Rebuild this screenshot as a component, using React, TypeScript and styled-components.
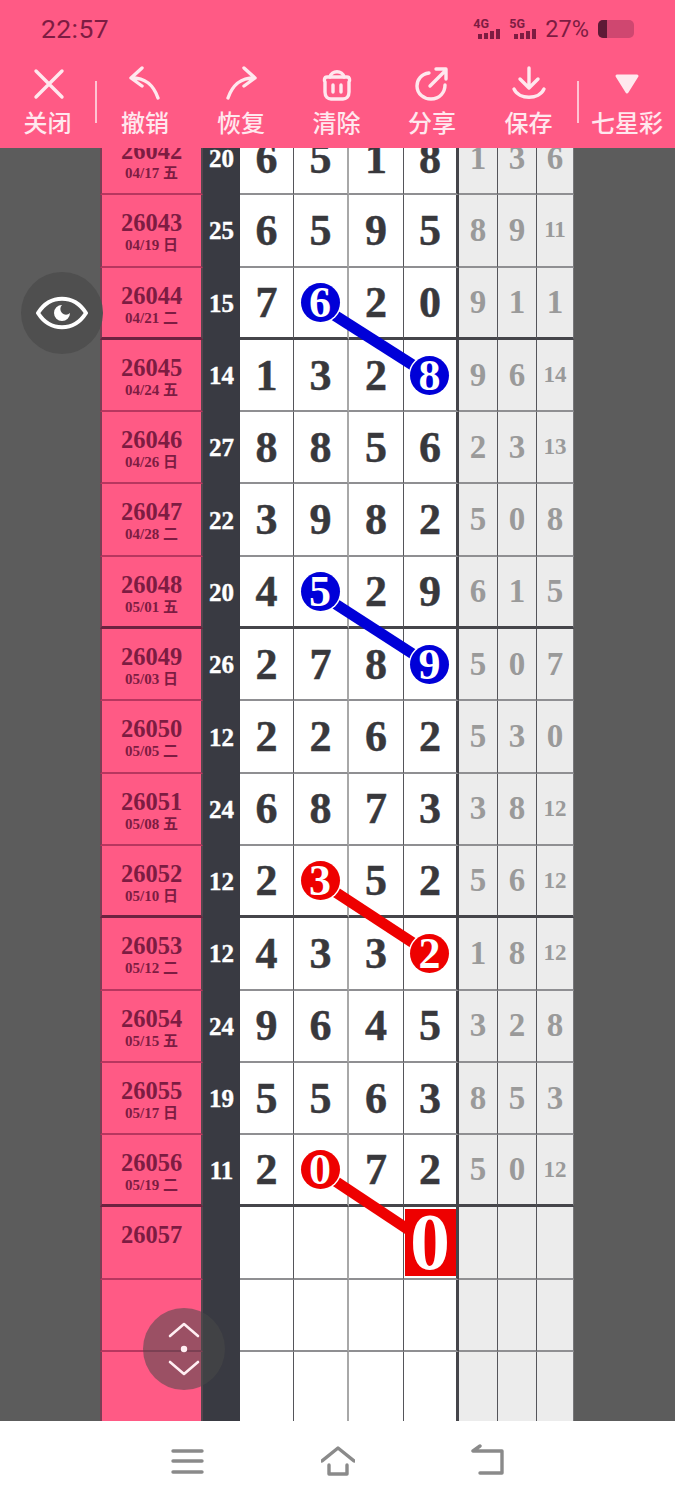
import React from "react";
import styled, { createGlobalStyle } from "styled-components";

const GlobalStyle = createGlobalStyle`
  html, body {
    margin: 0;
    padding: 0;
    background: #5c5c5c;
  }
`;

const SERIF = `"Liberation Serif", "Noto Sans CJK SC", serif`;
const ROW_H = 72.3;
const THIN_LINE = "2px solid #8f8f92";
const THICK_LINE = "3px solid #45454a";

const Page = styled.div`
  position: relative;
  width: 675px;
  height: 1500px;
  display: flex;
  flex-direction: column;
  overflow: hidden;
  font-family: "Noto Sans CJK SC", sans-serif;
`;

const Header = styled.header`
  height: 148px;
  flex: none;
  background: #ff5a85;
  z-index: 5;
`;

const StatusBar = styled.div`
  height: 57px;
  display: flex;
  align-items: center;
  justify-content: space-between;
  padding: 0 41px;
  color: #7d1c42;
`;

const Clock = styled.span`
  font-family: Roboto, sans-serif;
  font-size: 26.5px;
  letter-spacing: 0.4px;
`;

const StatusRight = styled.div`
  display: flex;
  align-items: center;
`;

const Signal = styled.div`
  position: relative;
  width: 30px;
  height: 19px;
  margin-right: 6px;
`;

const SignalLabel = styled.span`
  position: absolute;
  left: 0;
  top: 0;
  font-family: Roboto, sans-serif;
  font-weight: 700;
  font-size: 12.5px;
  line-height: 10px;
`;

const SignalBars = styled.svg`
  position: absolute;
  left: 5px;
  top: 10px;
`;

const Percent = styled.span`
  font-family: Roboto, sans-serif;
  font-size: 23.5px;
  margin-right: 9px;
`;

const Battery = styled.div`
  width: 36px;
  height: 18px;
  border-radius: 5px;
  background: #cf4770;
  overflow: hidden;
`;

const BatteryFill = styled.div`
  width: 9px;
  height: 100%;
  background: #5e1a36;
`;

const Toolbar = styled.div`
  height: 91px;
  display: flex;
  align-items: flex-start;
`;

const Tool = styled.div<{ $w: number }>`
  width: ${(p) => p.$w}px;
  flex: none;
  display: flex;
  flex-direction: column;
  align-items: center;
  color: #ffe8ee;
`;

const ToolIcon = styled.div`
  height: 38px;
  margin-top: 8px;
  display: flex;
  align-items: center;
  justify-content: center;
`;

const ToolLabel = styled.span`
  font-size: 24px;
  font-weight: 500;
  line-height: 30px;
  margin-top: 4px;
  white-space: nowrap;
`;

const ToolDivider = styled.div`
  width: 2px;
  height: 42px;
  flex: none;
  margin-top: 24px;
  background: #ffc4d3;
`;

const Main = styled.main`
  position: relative;
  flex: 1;
  min-height: 0;
  overflow: hidden;
  padding-left: 100px;
  background: #5c5c5c;
`;

const Table = styled.div`
  width: 473px;
  margin-top: -25px;
`;

const Row = styled.div`
  display: flex;
  height: ${ROW_H}px;
`;

const DateCell = styled.div<{ $thick: boolean }>`
  width: 103px;
  flex: none;
  box-sizing: border-box;
  display: flex;
  flex-direction: column;
  align-items: center;
  padding-top: 13px;
  background: #ff5a85;
  border-left: 2px solid #7a3f55;
  border-right: 2px solid #55454e;
  border-bottom: ${(p) => (p.$thick ? "3px solid #6e2240" : "2px solid #b8365f")};
  color: #7d1c42;
  font-family: ${SERIF};
  font-weight: 700;
`;

const Issue = styled.span`
  font-size: 24.5px;
  line-height: 29px;
`;

const DateText = styled.span`
  font-size: 15px;
  line-height: 17px;
`;

const SumCell = styled.div`
  width: 37px;
  flex: none;
  display: flex;
  align-items: center;
  justify-content: center;
  background: #393a42;
  color: #fff;
  font-family: ${SERIF};
  font-weight: 700;
  font-size: 25px;
  -webkit-text-stroke: 0.4px #fff;
`;

const NumCell = styled.div<{ $w: number; $line: string; $thick: boolean }>`
  width: ${(p) => p.$w}px;
  flex: none;
  box-sizing: border-box;
  display: flex;
  align-items: center;
  justify-content: center;
  background: #fff;
  border-right: ${(p) => p.$line};
  border-bottom: ${(p) => (p.$thick ? THICK_LINE : THIN_LINE)};
  color: #38383c;
  font-family: ${SERIF};
  font-weight: 700;
  font-size: 44px;
  -webkit-text-stroke: 0.5px currentColor;
`;

const GrayCell = styled.div<{ $w: number; $line: string; $small: boolean; $thick: boolean }>`
  width: ${(p) => p.$w}px;
  flex: none;
  box-sizing: border-box;
  display: flex;
  align-items: center;
  justify-content: center;
  background: #ececec;
  border-right: ${(p) => p.$line};
  border-bottom: ${(p) => (p.$thick ? THICK_LINE : THIN_LINE)};
  color: #9a9a9a;
  font-family: ${SERIF};
  font-weight: 700;
  font-size: ${(p) => (p.$small ? 23 : 33)}px;
`;

const Bubble = styled.span<{ $color: string }>`
  position: relative;
  z-index: 2;
  width: 39px;
  height: 39px;
  flex: none;
  margin-left: -1px;
  display: flex;
  align-items: center;
  justify-content: center;
  border-radius: 50%;
  background: ${(p) => p.$color};
  box-shadow: 0 0 0 1.5px #fff;
  color: #fff;
  font-size: 44px;
  line-height: 39px;
  -webkit-text-stroke: 0;
`;

const BigDigit = styled.span`
  position: relative;
  z-index: 2;
  width: 51px;
  height: 67px;
  flex: none;
  display: flex;
  align-items: center;
  justify-content: center;
  background: #ee0000;
  color: #fff;
  font-size: 80px;
  line-height: 67px;
  -webkit-text-stroke: 0;
`;

const Connectors = styled.svg`
  position: absolute;
  left: 0;
  top: 0;
  z-index: 1;
  pointer-events: none;
`;

const Fab = styled.div<{ $bg: string; $left: number; $top: number }>`
  position: absolute;
  left: ${(p) => p.$left}px;
  top: ${(p) => p.$top}px;
  z-index: 3;
  width: 82px;
  height: 82px;
  display: flex;
  align-items: center;
  justify-content: center;
  border-radius: 50%;
  background: ${(p) => p.$bg};
`;

const BottomNav = styled.nav`
  height: 79px;
  flex: none;
  display: flex;
  align-items: center;
  background: #fff;
  padding-left: 171px;
  gap: 116px;
  z-index: 5;
`;

type Mark = { col: number; kind: "blue" | "red" };
type RowData = {
  issue: string;
  date?: string;
  sum?: string;
  nums: string[];
  stats: string[];
  mark?: Mark;
  thick?: boolean;
};

const rows: RowData[] = [
  { issue: "26042", date: "04/17 五", sum: "20", nums: ["6", "5", "1", "8"], stats: ["1", "3", "6"] },
  { issue: "26043", date: "04/19 日", sum: "25", nums: ["6", "5", "9", "5"], stats: ["8", "9", "11"] },
  { issue: "26044", date: "04/21 二", sum: "15", nums: ["7", "6", "2", "0"], stats: ["9", "1", "1"], mark: { col: 1, kind: "blue" }, thick: true },
  { issue: "26045", date: "04/24 五", sum: "14", nums: ["1", "3", "2", "8"], stats: ["9", "6", "14"], mark: { col: 3, kind: "blue" } },
  { issue: "26046", date: "04/26 日", sum: "27", nums: ["8", "8", "5", "6"], stats: ["2", "3", "13"] },
  { issue: "26047", date: "04/28 二", sum: "22", nums: ["3", "9", "8", "2"], stats: ["5", "0", "8"] },
  { issue: "26048", date: "05/01 五", sum: "20", nums: ["4", "5", "2", "9"], stats: ["6", "1", "5"], mark: { col: 1, kind: "blue" }, thick: true },
  { issue: "26049", date: "05/03 日", sum: "26", nums: ["2", "7", "8", "9"], stats: ["5", "0", "7"], mark: { col: 3, kind: "blue" } },
  { issue: "26050", date: "05/05 二", sum: "12", nums: ["2", "2", "6", "2"], stats: ["5", "3", "0"] },
  { issue: "26051", date: "05/08 五", sum: "24", nums: ["6", "8", "7", "3"], stats: ["3", "8", "12"] },
  { issue: "26052", date: "05/10 日", sum: "12", nums: ["2", "3", "5", "2"], stats: ["5", "6", "12"], mark: { col: 1, kind: "red" }, thick: true },
  { issue: "26053", date: "05/12 二", sum: "12", nums: ["4", "3", "3", "2"], stats: ["1", "8", "12"], mark: { col: 3, kind: "red" } },
  { issue: "26054", date: "05/15 五", sum: "24", nums: ["9", "6", "4", "5"], stats: ["3", "2", "8"] },
  { issue: "26055", date: "05/17 日", sum: "19", nums: ["5", "5", "6", "3"], stats: ["8", "5", "3"] },
  { issue: "26056", date: "05/19 二", sum: "11", nums: ["2", "0", "7", "2"], stats: ["5", "0", "12"], mark: { col: 1, kind: "red" }, thick: true },
  { issue: "26057", nums: ["", "", "", "0"], stats: ["", "", ""] },
  { issue: "", nums: ["", "", "", ""], stats: ["", "", ""] },
  { issue: "", nums: ["", "", "", ""], stats: ["", "", ""] },
];

const numCols = [
  { w: 54, line: "1px solid #55555a" },
  { w: 55, line: "2px solid #a8a8a8" },
  { w: 55, line: "1px solid #55555a" },
  { w: 55, line: "3px solid #45454a" },
];

const statCols = [
  { w: 39, line: "1px solid #55555a" },
  { w: 39, line: "1px solid #55555a" },
  { w: 37, line: "1px solid #77777a" },
];

const links = [
  { color: "#0000d8", y1: 158, y2: 228 },
  { color: "#0000d8", y1: 446, y2: 517 },
  { color: "#ee0000", y1: 734, y2: 806 },
  { color: "#ee0000", y1: 1023, y2: 1096 },
];

const Icon: React.FC<{ w?: number; h?: number; children: React.ReactNode }> = ({ w = 36, h = 36, children }) => (
  <svg width={w} height={h} viewBox={`0 0 ${w} ${h}`} fill="none" stroke="#ffe8ee" strokeWidth={3.4} strokeLinecap="round" strokeLinejoin="round">
    {children}
  </svg>
);

const tools = [
  {
    label: "关闭",
    w: 95,
    icon: <Icon><path d="M6 5 L32 31 M32 5 L6 31" /></Icon>,
  },
  {
    label: "撤销",
    w: 96,
    icon: <Icon><path d="M15 2 L4 12 L15 20 M5 12 C18 12 26 18 31 32" /></Icon>,
  },
  {
    label: "恢复",
    w: 96,
    icon: <Icon><path d="M21 2 L32 12 L21 20 M31 12 C18 12 10 18 5 32" /></Icon>,
  },
  {
    label: "清除",
    w: 95,
    icon: (
      <Icon>
        <path d="M8 11 H28 C31 11 31 15 30 16 V26 C30 31 27 33 24 33 H12 C9 33 6 31 6 26 V16 C5 15 5 11 8 11 Z" />
        <path d="M11 11 C12 4 24 4 25 11 M14 19 V26 M22 19 V26" />
      </Icon>
    ),
  },
  {
    label: "分享",
    w: 96,
    icon: (
      <Icon>
        <path d="M15 7 C7 8 3 14 3 20 C3 28 10 33 17 33 C26 33 31 26 31 19" />
        <path d="M16 20 L32 4 M22 3 H32 V13" />
      </Icon>
    ),
  },
  {
    label: "保存",
    w: 97,
    icon: (
      <Icon>
        <path d="M18 2 V21 M9 13 L18 22 L27 13 M3 23 C8 34 28 34 33 23" />
      </Icon>
    ),
  },
];

const NavIcon: React.FC<{ children: React.ReactNode }> = ({ children }) => (
  <svg width={34} height={34} viewBox="0 0 34 34" fill="none" stroke="#8a8a8a" strokeWidth={3.4} strokeLinecap="round" strokeLinejoin="round">
    {children}
  </svg>
);

const SignalIcon: React.FC<{ label: string }> = ({ label }) => (
  <Signal>
    <SignalLabel>{label}</SignalLabel>
    <SignalBars width={23} height={10} viewBox="0 0 23 10" fill="currentColor">
      <rect x="0" y="5" width="4" height="5" />
      <rect x="6" y="4" width="4" height="6" />
      <rect x="12" y="2" width="4" height="8" />
      <rect x="18" y="0" width="4" height="10" />
    </SignalBars>
  </Signal>
);

export default function App() {
  return (
    <Page>
      <GlobalStyle />
      <Header>
        <StatusBar>
          <Clock>22:57</Clock>
          <StatusRight>
            <SignalIcon label="4G" />
            <SignalIcon label="5G" />
            <Percent>27%</Percent>
            <Battery>
              <BatteryFill />
            </Battery>
          </StatusRight>
        </StatusBar>
        <Toolbar>
          {tools.slice(0, 1).map((t) => (
            <Tool key={t.label} $w={t.w}>
              <ToolIcon>{t.icon}</ToolIcon>
              <ToolLabel>{t.label}</ToolLabel>
            </Tool>
          ))}
          <ToolDivider />
          {tools.slice(1).map((t) => (
            <Tool key={t.label} $w={t.w}>
              <ToolIcon>{t.icon}</ToolIcon>
              <ToolLabel>{t.label}</ToolLabel>
            </Tool>
          ))}
          <ToolDivider />
          <Tool $w={96}>
            <ToolIcon>
              <svg width={26} height={22} viewBox="0 0 26 22" fill="#ffe8ee" stroke="#ffe8ee" strokeWidth={3} strokeLinejoin="round">
                <path d="M3 3 H23 L13 19 Z" />
              </svg>
            </ToolIcon>
            <ToolLabel>七星彩</ToolLabel>
          </Tool>
        </Toolbar>
      </Header>

      <Main>
        <Table>
          {rows.map((r, i) => (
            <Row key={i}>
              <DateCell $thick={!!r.thick}>
                <Issue>{r.issue}</Issue>
                {r.date && <DateText>{r.date}</DateText>}
              </DateCell>
              <SumCell>{r.sum}</SumCell>
              {numCols.map((c, j) => {
                const n = r.nums[j];
                return (
                  <NumCell key={j} $w={c.w} $line={c.line} $thick={!!r.thick}>
                    {r.mark && r.mark.col === j ? (
                      <Bubble $color={r.mark.kind === "blue" ? "#0000d8" : "#ee0000"}>{n}</Bubble>
                    ) : r.issue === "26057" && n ? (
                      <BigDigit>{n}</BigDigit>
                    ) : (
                      n
                    )}
                  </NumCell>
                );
              })}
              {statCols.map((c, j) => (
                <GrayCell key={j} $w={c.w} $line={c.line} $small={r.stats[j].length > 1} $thick={!!r.thick}>
                  {r.stats[j]}
                </GrayCell>
              ))}
            </Row>
          ))}
        </Table>

        <Connectors width={675} height={1273}>
          {links.map((l) => (
            <line key={l.y1} x1={320} y1={l.y1} x2={430} y2={l.y2} stroke={l.color} strokeWidth={11} />
          ))}
        </Connectors>

        <Fab $bg="#4f4f4f" $left={21} $top={124}>
          <svg width={52} height={36} viewBox="0 0 52 36" fill="none" stroke="#fff" strokeWidth={4}>
            <path d="M2 18 C14 -1 38 -1 50 18 C38 37 14 37 2 18 Z" strokeLinejoin="round" />
            <path d="M26 10 A8 8 0 1 0 34 18 A5 5 0 0 1 26 10 Z" fill="#fff" stroke="none" />
          </svg>
        </Fab>

        <Fab $bg="rgba(72, 72, 72, 0.55)" $left={143} $top={1160}>
          <svg width={34} height={56} viewBox="0 0 34 56" fill="none" stroke="#ffeef2" strokeWidth={2.6} strokeLinecap="round" strokeLinejoin="round">
            <path d="M3 15 L17 3 L31 15 M3 41 L17 53 L31 41" />
            <circle cx="17" cy="28" r="3.2" fill="#ffeef2" stroke="none" />
          </svg>
        </Fab>
      </Main>

      <BottomNav>
        <NavIcon>
          <path d="M2 7 H31 M2 17 H31 M2 28 H31" />
        </NavIcon>
        <NavIcon>
          <path d="M1 17 L17 4 L33 17 M8 21 V30 H26 V21" />
        </NavIcon>
        <NavIcon>
          <path d="M9 2 L2 7 H31 V29 H9" />
        </NavIcon>
      </BottomNav>
    </Page>
  );
}
